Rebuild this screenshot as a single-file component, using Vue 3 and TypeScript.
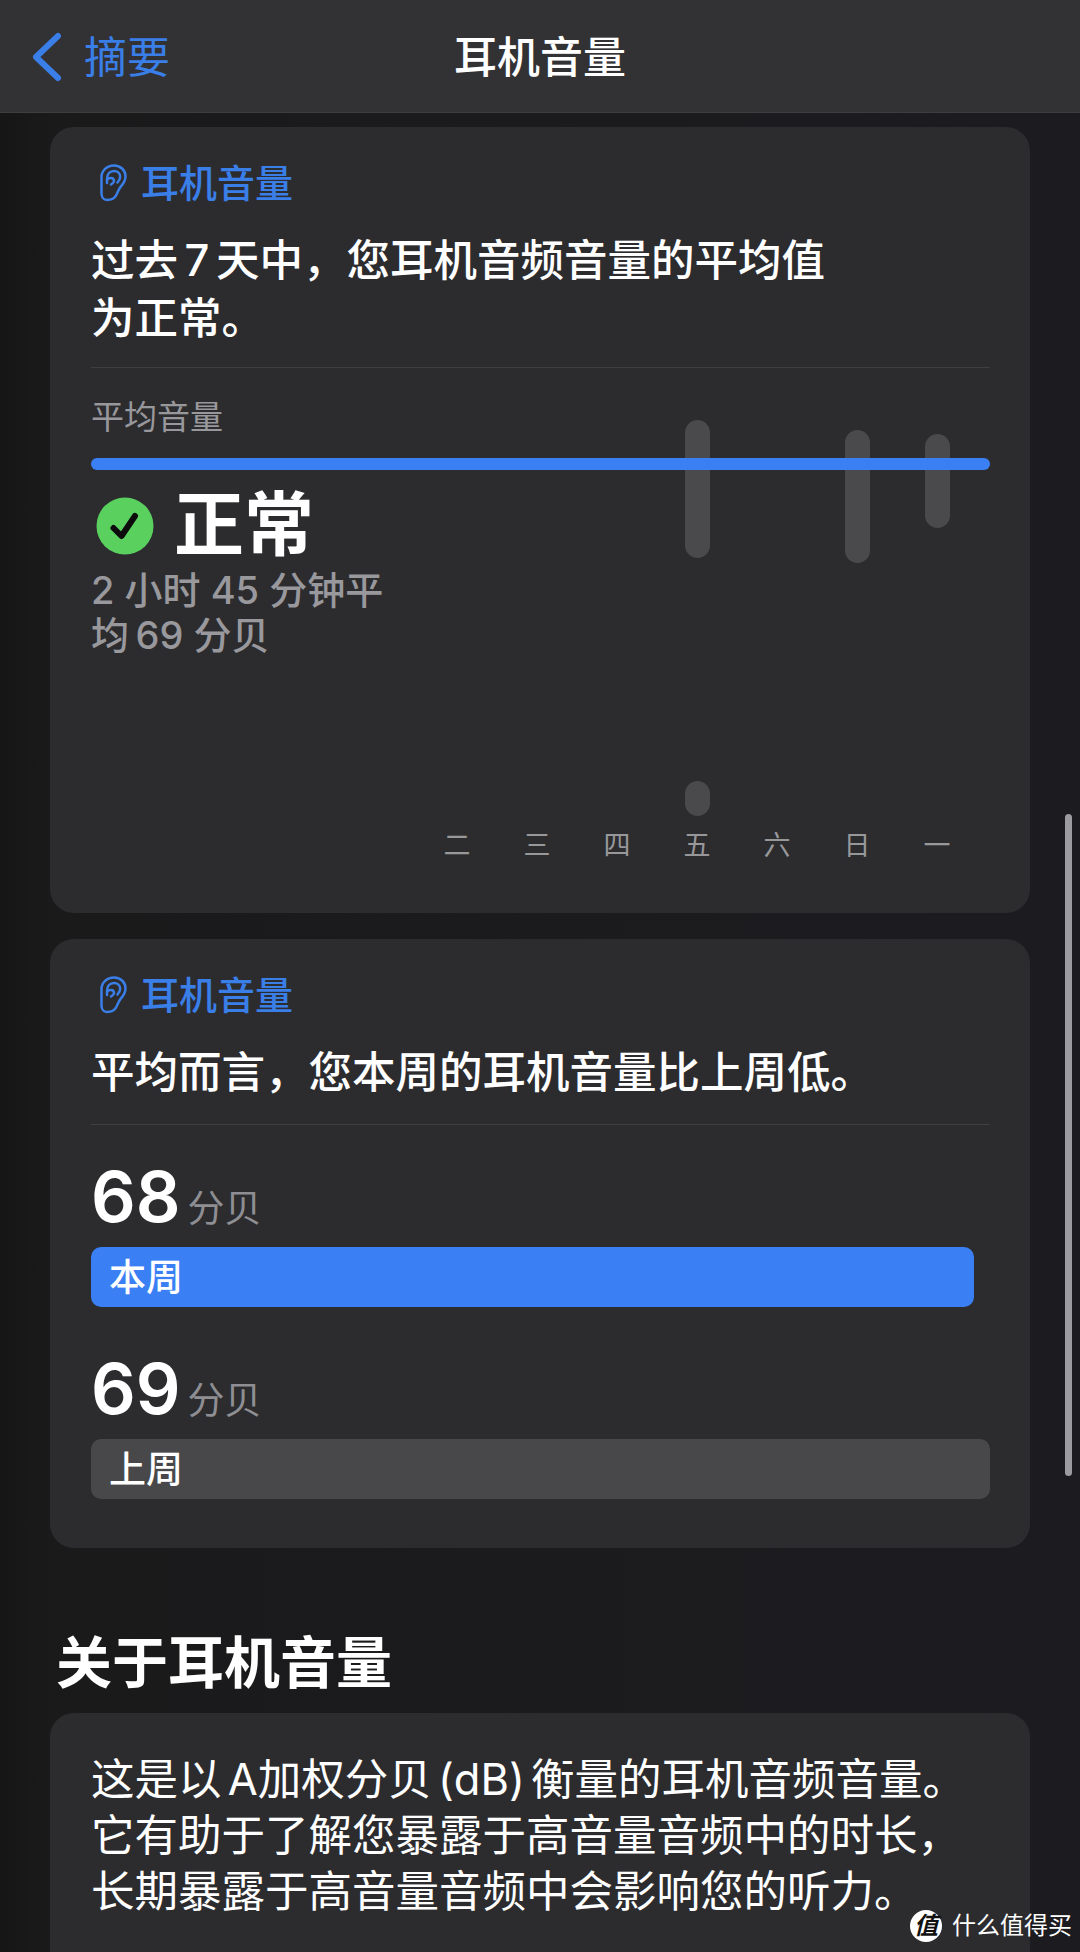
<template>
  <div class="page">
    <header class="nav">
      <div class="back">
        <svg class="chevron" viewBox="0 0 32 52" width="32" height="52">
          <path d="M28 5 L6 26 L28 47" fill="none" stroke="currentColor" stroke-width="6" stroke-linecap="round" stroke-linejoin="round" />
        </svg>
        <span>摘要</span>
      </div>
      <h1>耳机音量</h1>
    </header>

    <main class="content">
      <section class="card first">
        <div class="card-title">
          <svg class="ear" viewBox="0 0 27 38" width="27" height="38">
            <path d="M7 36 C3.500 36 1.500 33 1.500 29.500 V13 C1.500 6.500 7 1.500 14 1.500 C20.800 1.500 25.500 6.500 25.500 12.500 C25.500 17 23.200 19.800 20.800 22.600 C18.500 25.300 17.800 28 16.300 31 C14.800 34.200 11.500 36 7 36 Z" fill="none" stroke="currentColor" stroke-width="2.500" />
            <path d="M7 15 C7 10 10 7 14 7 C17.600 7 20.200 9.500 20.200 12.800 C20.200 15.200 19 16.800 17.500 18.500 M7 15 V19 M7.500 15.500 C9 13.300 13.500 13.500 14 16.500 C14.300 18.500 12.500 19.500 11 20.500" fill="none" stroke="currentColor" stroke-width="2.500" stroke-linecap="round" />
          </svg>
          <span>耳机音量</span>
        </div>
        <p class="lead">过去 7 天中，您耳机音频音量的平均值<br />为正常。</p>
        <div class="divider"></div>
        <div class="chart-label">平均音量</div>
        <div class="avg-line"></div>
        <div class="status">
          <svg class="check" viewBox="0 0 58 58" width="58" height="58">
            <circle cx="29" cy="29" r="28.500" fill="#5ad15f" />
            <path d="M17.500 31 L25.500 39 L39 19" fill="none" stroke="#0c0c0c" stroke-width="6" stroke-linecap="round" stroke-linejoin="round" />
          </svg>
          <span>正常</span>
        </div>
        <p class="detail">2 小时 45 分钟平<br />均&thinsp;69 分贝</p>

        <div class="chart">
          <div v-for="day in days" :key="day.label" class="day">
            <div class="track">
              <i
                v-for="bar in day.bars"
                :key="bar.top"
                class="bar"
                :style="{ top: bar.top + 'px', height: bar.height + 'px' }"
              ></i>
            </div>
            <span>{{ day.label }}</span>
          </div>
        </div>
      </section>

      <section class="card second">
        <div class="card-title">
          <svg class="ear" viewBox="0 0 27 38" width="27" height="38">
            <path d="M7 36 C3.500 36 1.500 33 1.500 29.500 V13 C1.500 6.500 7 1.500 14 1.500 C20.800 1.500 25.500 6.500 25.500 12.500 C25.500 17 23.200 19.800 20.800 22.600 C18.500 25.300 17.800 28 16.300 31 C14.800 34.200 11.500 36 7 36 Z" fill="none" stroke="currentColor" stroke-width="2.500" />
            <path d="M7 15 C7 10 10 7 14 7 C17.600 7 20.200 9.500 20.200 12.800 C20.200 15.200 19 16.800 17.500 18.500 M7 15 V19 M7.500 15.500 C9 13.300 13.500 13.500 14 16.500 C14.300 18.500 12.500 19.500 11 20.500" fill="none" stroke="currentColor" stroke-width="2.500" stroke-linecap="round" />
          </svg>
          <span>耳机音量</span>
        </div>
        <p class="lead single">平均而言，您本周的耳机音量比上周低。</p>
        <div class="divider"></div>
        <div class="compare">
          <div class="value"><strong>68</strong><span>分贝</span></div>
          <div class="meter current">本周</div>
          <div class="value later"><strong>69</strong><span>分贝</span></div>
          <div class="meter previous">上周</div>
        </div>
      </section>

      <h2>关于耳机音量</h2>
      <section class="card about">
        <p>这是以 A加权分贝 (dB) 衡量的耳机音频音量。<br />它有助于了解您暴露于高音量音频中的时长，<br />长期暴露于高音量音频中会影响您的听力。</p>
      </section>
    </main>

    <i class="scrollbar"></i>
    <div class="watermark">
      <b>值</b>
      <span>什么值得买</span>
    </div>
  </div>
</template>

<script setup lang="ts">
interface Bar {
  top: number
  height: number
}

const days: { label: string; bars: Bar[] }[] = [
  { label: '二', bars: [] },
  { label: '三', bars: [] },
  { label: '四', bars: [] },
  { label: '五', bars: [{ top: 0, height: 138 }, { top: 361, height: 35 }] },
  { label: '六', bars: [] },
  { label: '日', bars: [{ top: 10, height: 133 }] },
  { label: '一', bars: [{ top: 14, height: 94 }] },
]
</script>

<style>
html,
body {
  margin: 0;
  background: #1b1a1d;
}
</style>

<style scoped>
.page {
  position: relative;
  width: 1080px;
  height: 1952px;
  overflow: hidden;
  background: linear-gradient(90deg, #161616 0, #1a1a1b 50px, #1c1b1f 1030px);
  color: #fff;
  font-family: Inter, "Noto Sans CJK SC", sans-serif;
}

.nav {
  position: relative;
  display: flex;
  align-items: center;
  justify-content: center;
  height: 113px;
  box-sizing: border-box;
  padding-bottom: 5px;
  background: #323235;
  border-bottom: 1px solid #3e3e40;
}

.nav h1 {
  margin: 0;
  font-size: 43px;
  font-weight: 500;
}

.back {
  position: absolute;
  left: 30px;
  top: 31px;
  display: flex;
  align-items: center;
  gap: 22px;
  color: #3a7ee8;
  font-size: 43px;
  line-height: 52px;
}

.content {
  padding: 14px 50px 0;
}

.card {
  position: relative;
  box-sizing: border-box;
  padding: 0 40px 0 41px;
  background: #2c2c2f;
  border-radius: 24px;
}

.first {
  height: 786px;
}

.second {
  height: 609px;
  margin-top: 26px;
}

.card-title {
  display: flex;
  align-items: center;
  gap: 14px;
  padding: 30px 0 0 9px;
  height: 52px;
  color: #3a7ee8;
  font-size: 38px;
  font-weight: 500;
  line-height: 52px;
}

.lead {
  margin: 22px 0 0;
  font-size: 43.500px;
  font-weight: 500;
  line-height: 58px;
  word-spacing: -5px;
}

.lead.single {
  margin-bottom: 23px;
}

.divider {
  height: 1px;
  margin-top: 20px;
  background: #3f3f42;
}

.chart-label {
  margin-top: 27px;
  color: #98989c;
  font-size: 33px;
  line-height: 44px;
}

.avg-line {
  position: relative;
  z-index: 2;
  height: 12px;
  margin-top: 19px;
  background: #3a7ff4;
  border-radius: 6px;
}

.status {
  display: flex;
  align-items: center;
  gap: 20px;
  margin: 15px 0 0 5px;
  height: 82px;
  font-size: 70px;
  font-weight: 700;
}

.status span {
  margin-top: -13px;
}

.detail {
  margin: 0;
  padding-top: 1px;
  color: #98989d;
  font-size: 38px;
  font-weight: 500;
  line-height: 45px;
}

/* 图表压在正文上层，柱子位置由数据决定 */
.chart {
  position: absolute;
  left: 387px;
  top: 293px;
  display: flex;
  gap: 40px;
}

.day {
  width: 40px;
  text-align: center;
  color: #98989b;
  font-size: 27px;
  line-height: 36px;
}

.track {
  position: relative;
  height: 408px;
}

.bar {
  position: absolute;
  left: 8px;
  width: 25px;
  background: #4a4a4d;
  border-radius: 12.500px;
}

.compare {
  padding-top: 32px;
}

.value {
  display: flex;
  align-items: baseline;
  gap: 7px;
  height: 90px;
}

.value.later {
  margin-top: 42px;
}

.value strong {
  font-size: 70px;
  font-weight: 600;
  line-height: 80px;
}

.value span {
  color: #8e8e93;
  font-size: 37px;
}

.meter {
  box-sizing: border-box;
  height: 60px;
  padding-left: 18px;
  border-radius: 10px;
  font-size: 37px;
  font-weight: 500;
  line-height: 62px;
}

.current {
  width: 883px;
  background: #3a7ff4;
}

.previous {
  width: 899px;
  background: #48484a;
}

h2 {
  margin: 84px 0 0 6px;
  font-size: 56px;
  font-weight: 700;
  line-height: 62px;
}

.about {
  height: 300px;
  margin-top: 19px;
  padding-top: 38px;
}

.about p {
  margin: 0;
  font-size: 43.500px;
  line-height: 56px;
  white-space: nowrap;
  word-spacing: -6px;
}

.scrollbar {
  position: absolute;
  left: 1065px;
  top: 814px;
  width: 7px;
  height: 662px;
  background: #9c9c9f;
  border-radius: 3.500px;
}

.watermark {
  position: absolute;
  left: 910px;
  top: 1910px;
  display: flex;
  align-items: center;
  gap: 10px;
  font-size: 24px;
  line-height: 32px;
}

.watermark b {
  width: 32px;
  height: 32px;
  background: #fff;
  border-radius: 50%;
  color: #111;
  font-size: 24px;
  font-weight: 700;
  font-style: italic;
  text-align: center;
}
</style>
